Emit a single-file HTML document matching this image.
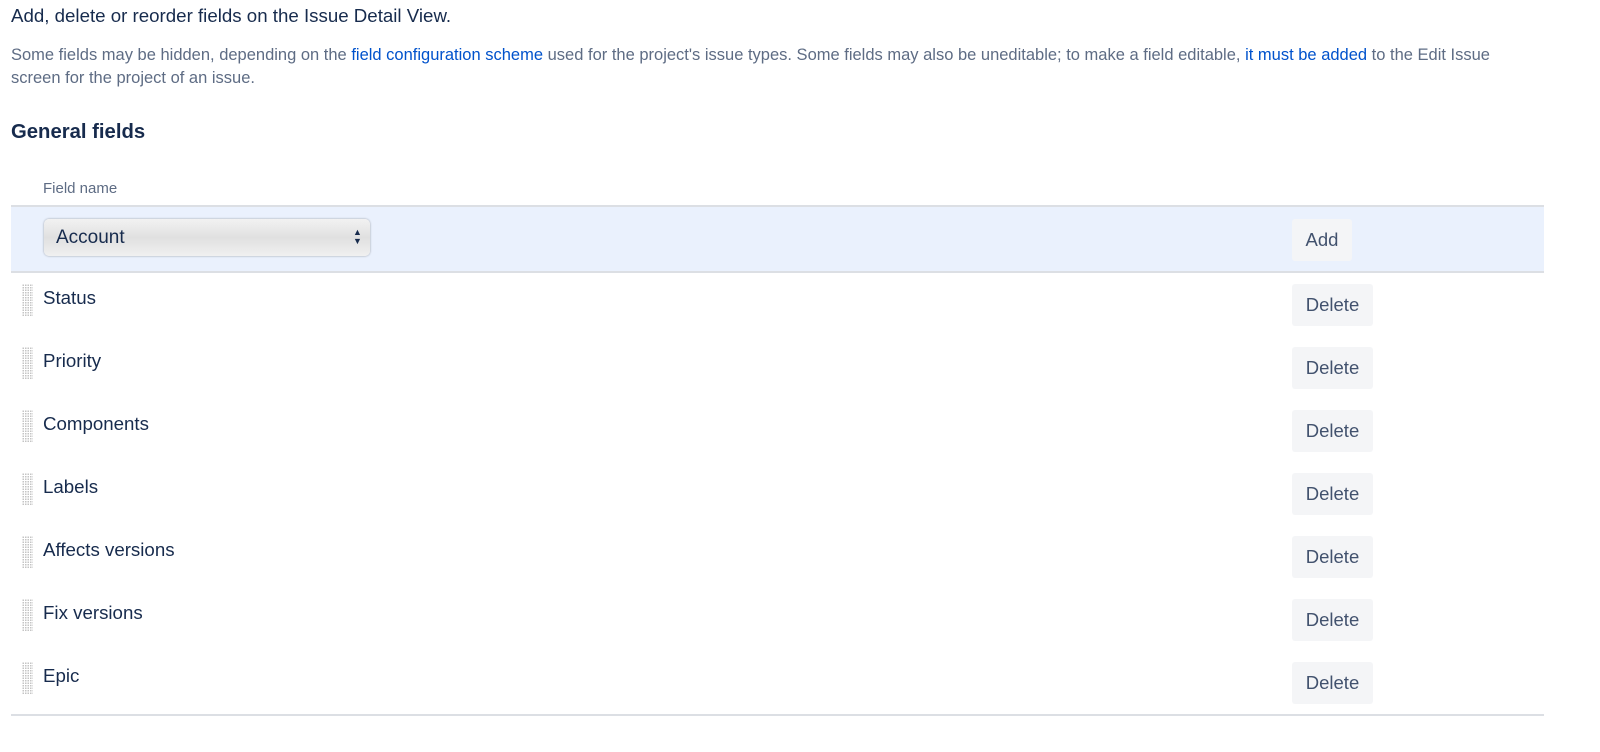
<!DOCTYPE html>
<html><head><style>
body{margin:0;width:1600px;height:752px;background:#fff;font-family:"Liberation Sans",sans-serif;position:relative;overflow:hidden}
.a{position:absolute}
a{color:#0052cc;text-decoration:none}
.grip{position:absolute;left:22px;width:11px;height:32px;background-image:radial-gradient(circle,#c4c4c4 0.8px,transparent 1px);background-size:2.5px 2.5px}
.row{position:absolute;left:11px;width:1533px;height:63px}
.row .t{position:absolute;left:32px;font-size:18.7px;color:#172b4d;top:3px}
.btn{position:absolute;left:1281px;width:81px;height:42px;background:#f4f5f7;border-radius:3px;color:#42526e;font-size:18.5px;line-height:42px;text-align:center}
</style></head><body>
<div class="a" style="left:11px;top:5px;font-size:18.7px;color:#172b4d">Add, delete or reorder fields on the Issue Detail View.</div>
<div class="a" style="left:11px;top:44px;width:1515px;font-size:16.5px;line-height:23px;color:#5e6c84">Some fields may be hidden, depending on the <a>field configuration scheme</a> used for the project's issue types. Some fields may also be uneditable; to make a field editable, <a>it must be added</a> to the Edit Issue screen for the project of an issue.</div>
<div class="a" style="left:11px;top:121px;font-size:20.3px;font-weight:bold;color:#172b4d">General fields</div>
<div class="a" style="left:43px;top:180px;font-size:15px;color:#5e6c84">Field name</div>
<div class="a" style="left:11px;top:205px;width:1533px;height:64px;background:#eaf1fd;border-top:2px solid #dcdfe4;border-bottom:2px solid #dcdfe4"></div>
<div class="a" style="left:44px;top:219px;width:326px;height:37px;border-radius:5px;background:linear-gradient(#f2f2f2,#e0e0e0 50%,#f0f0f0);box-shadow:0 0 2px rgba(0,0,0,.35)">
<span class="a" style="left:12px;top:8px;font-size:19px;color:#172b4d">Account</span>
<span class="a" style="left:309px;top:9px;font-size:9px;line-height:9px;color:#172b4d">▲<br>▼</span></div>
<div class="btn" style="left:1292px;top:219px;width:60px">Add</div>
<div class="row" style="top:284px"><div class="grip" style="left:11px;top:0"></div><div class="t">Status</div><div class="btn" style="top:0">Delete</div></div>
<div class="row" style="top:347px"><div class="grip" style="left:11px;top:0"></div><div class="t">Priority</div><div class="btn" style="top:0">Delete</div></div>
<div class="row" style="top:410px"><div class="grip" style="left:11px;top:0"></div><div class="t">Components</div><div class="btn" style="top:0">Delete</div></div>
<div class="row" style="top:473px"><div class="grip" style="left:11px;top:0"></div><div class="t">Labels</div><div class="btn" style="top:0">Delete</div></div>
<div class="row" style="top:536px"><div class="grip" style="left:11px;top:0"></div><div class="t">Affects versions</div><div class="btn" style="top:0">Delete</div></div>
<div class="row" style="top:599px"><div class="grip" style="left:11px;top:0"></div><div class="t">Fix versions</div><div class="btn" style="top:0">Delete</div></div>
<div class="row" style="top:662px"><div class="grip" style="left:11px;top:0"></div><div class="t">Epic</div><div class="btn" style="top:0">Delete</div></div>
<div class="a" style="left:11px;top:714px;width:1533px;height:2px;background:#dcdfe4"></div>
</body></html>
